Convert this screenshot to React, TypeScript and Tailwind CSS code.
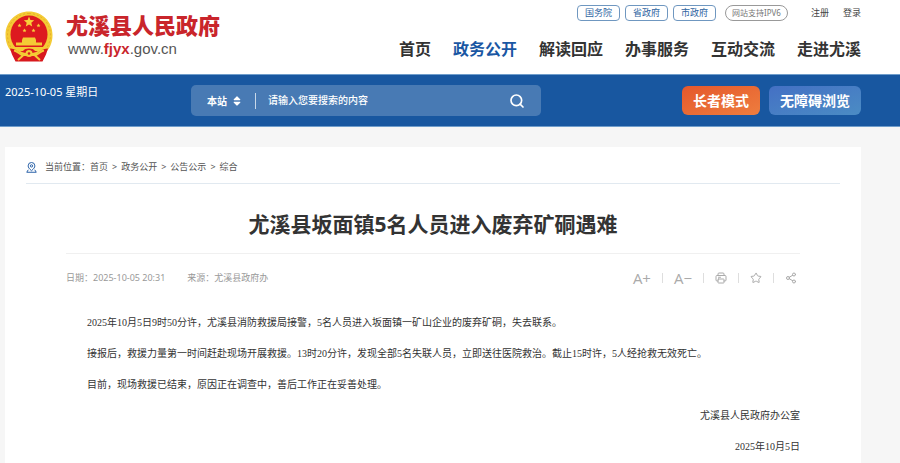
import React, { useState } from "react";
import { FaSort } from "react-icons/fa";
import { Search, Share2, Star } from "lucide-react";

const govLinks = ["国务院", "省政府", "市政府"];

const navItems = [
  { title: "首页", active: false },
  { title: "政务公开", active: true },
  { title: "解读回应", active: false },
  { title: "办事服务", active: false },
  { title: "互动交流", active: false },
  { title: "走进尤溪", active: false },
];

const crumbs = ["首页", "政务公开", "公告公示", "综合"];

const paragraphs = [
  "2025年10月5日9时50分许，尤溪县消防救援局接警，5名人员进入坂面镇一矿山企业的废弃矿硐，失去联系。",
  "接报后，救援力量第一时间赶赴现场开展救援。13时20分许，发现全部5名失联人员，立即送往医院救治。截止15时许，5人经抢救无效死亡。",
  "目前，现场救援已结束，原因正在调查中，善后工作正在妥善处理。",
];

const Emblem = () => (
  <svg viewBox="0 0 48 51" className="h-[51px] w-12 shrink-0" aria-hidden="true">
    <path
      d="M24 0.5C37 0.5 47.5 10.5 47.5 24c0 8-3 14-8 19l-3 7H11.500l-3-7C3.500 38 0.500 32 0.500 24 0.500 10.500 11 0.500 24 0.500z"
      fill="#f4cb35"
    />
    <path
      d="M24 2.500C36 2.500 45.500 12 45.500 24c0 7-3 13-7 17M24 2.500C12 2.500 2.500 12 2.500 24c0 7 3 13 7 17"
      fill="none"
      stroke="#e6b02a"
      strokeWidth="1"
      strokeDasharray="2 2"
    />
    <ellipse cx="24" cy="23.500" rx="18.500" ry="19" fill="#dd1a1f" />
    <path
      d="M24 5.500l1.400 3.500 3.800.3-2.900 2.500.9 3.700L24 13.500l-3.200 2 .9-3.700-2.900-2.500 3.800-.3z"
      fill="#f8d23a"
    />
    <g fill="#f8d23a">
      <path d="M14.500 12.500l.6 1.300 1.400.1-1.100.9.400 1.400-1.300-.8-1.200.8.300-1.400-1.100-.9 1.400-.1z" />
      <path d="M33.500 12.500l.6 1.300 1.400.1-1.100.9.400 1.400-1.300-.8-1.200.8.300-1.400-1.100-.9 1.400-.1z" />
      <path d="M19.500 17.500l.6 1.300 1.400.1-1.100.9.400 1.400-1.300-.8-1.200.8.300-1.400-1.100-.9 1.400-.1z" />
      <path d="M28.500 17.500l.6 1.300 1.400.1-1.100.9.400 1.400-1.300-.8-1.200.8.300-1.400-1.100-.9 1.400-.1z" />
    </g>
    <path d="M18 26.500h12l1 2.500v2.500h6v3H11v-3h6V29z" fill="#f4cb35" />
    <path d="M8 36h32l-4.500 4H30c-1-1.700-3-2.500-6-2.500s-5 .8-6 2.500h-5.500z" fill="#f4cb35" />
    <path
      d="M5 37.500c5 0 8 3 12 6h14c4-3 7-6 12-6l-2 6-3.500 7h-27L7 43.500z"
      fill="#d8181d"
    />
    <path
      d="M9 39.500c3 .5 5 3 8 4.500h14c3-1.500 5-4 8-4.500M13 49l5-4.500M35 49l-5-4.500"
      fill="none"
      stroke="#f4cb35"
      strokeWidth="2"
    />
    <circle cx="24" cy="42.500" r="3.500" fill="#f4cb35" />
    <circle cx="24" cy="42.500" r="1.300" fill="#dd1a1f" />
  </svg>
);

const PinIcon = () => (
  <svg
    viewBox="0 0 22 22"
    className="size-[11px] shrink-0"
    fill="none"
    stroke="#2a62a8"
    strokeWidth="2"
    strokeLinejoin="round"
    aria-hidden="true"
  >
    <path d="M11 17.500C6.500 13.500 4.300 10.800 4.300 7.700a6.700 6.700 0 0 1 13.400 0c0 3.100-2.200 5.800-6.700 9.800z" />
    <circle cx="11" cy="7.800" r="2.300" />
    <path d="M4.500 15.500L1.500 20.500h19l-3-5" />
  </svg>
);

const PrintIcon = () => (
  <svg
    viewBox="0 0 24 24"
    className="size-3"
    fill="none"
    stroke="currentColor"
    strokeWidth="2"
    strokeLinejoin="round"
    strokeLinecap="round"
    aria-hidden="true"
  >
    <path d="M6 7V4a2 2 0 0 1 2-2h8a2 2 0 0 1 2 2v3" />
    <path d="M6 18H4a2 2 0 0 1-2-2V9a2 2 0 0 1 2-2h16a2 2 0 0 1 2 2v7a2 2 0 0 1-2 2h-2" />
    <rect x="6" y="14" width="12" height="8" rx="1" />
    <path d="M7 10.500h4" />
  </svg>
);

const Divider = () => <span className="h-2.5 w-px bg-[#dedede]" />;

const Header = () => (
  <header className="bg-white">
    <div className="mr-[39px] ml-[5px] flex h-[74px] justify-between">
      <a href="#" className="flex items-start gap-[13px] pt-[11px]">
        <Emblem />
        <span className="flex flex-col whitespace-nowrap">
          <span className="text-[22px] leading-[29px] font-black text-[#c9252b]">
            尤溪县人民政府
          </span>
          <span className="pl-0.5 font-['Liberation_Sans',sans-serif] text-[15px] leading-[18px] text-[#555]">
            www.<b className="text-[#c9252b]">fjyx</b>.gov.cn
          </span>
        </span>
      </a>
      <div className="flex flex-col items-end whitespace-nowrap">
        <div className="flex items-center gap-[5px] pt-[5px] text-[9px] leading-4 text-[#444]">
          {govLinks.map((item) => (
            <a
              href="#"
              key={item}
              className="flex h-4 w-[43px] items-center justify-center rounded-sm border border-[#6f97c0] text-[#2f659f]"
            >
              {item}
            </a>
          ))}
          <a
            href="#"
            className="ml-1 flex h-4 w-[63px] items-center justify-center rounded-full border border-[#999] text-[8px] text-[#777]"
          >
            网站支持IPV6
          </a>
          <a href="#" className="ml-[18px]">
            注册
          </a>
          <a href="#" className="ml-[9px]">
            登录
          </a>
        </div>
        <nav className="flex gap-[22px] pt-4 text-[16px] leading-6 font-bold">
          {navItems.map((item) => (
            <a
              href="#"
              key={item.title}
              className={item.active ? "text-[#1a57a3]" : "text-[#333]"}
            >
              {item.title}
            </a>
          ))}
        </nav>
      </div>
    </div>
  </header>
);

const SearchBar = () => {
  const [keyword, setKeyword] = useState<string>("");

  return (
    <div className="border-y border-[#6f9dcb] bg-[#1857a0]">
      <div className="mr-[39px] ml-[5px] flex items-start py-2.5 text-white">
        <span className="w-[186px] shrink-0 text-[11px] leading-[14px]">
          2025-10-05 星期日
        </span>
        <form
          className="flex h-[31px] max-w-[350px] flex-1 items-center rounded-[5px] bg-[#487ab4] px-4 text-[10px] font-medium"
          onSubmit={(e) => e.preventDefault()}
        >
          <select
            aria-label="搜索范围"
            className="h-6 w-6 appearance-none bg-transparent leading-6 font-bold"
          >
            <option>本站</option>
          </select>
          <FaSort className="size-3" />
          <span className="mx-3 h-4 w-px bg-[#c8d8e9]" />
          <input
            type="text"
            aria-label="搜索内容"
            placeholder="请输入您要搜索的内容"
            className="min-w-0 flex-1 placeholder:text-white focus:outline-none"
            value={keyword}
            onChange={(e) => setKeyword(e.target.value)}
          />
          <button type="submit" aria-label="搜索">
            <Search className="size-4" strokeWidth={2.5} />
          </button>
        </form>
        <div className="ml-auto flex h-[31px] items-center gap-[9px] text-[14px] font-bold">
          <button
            type="button"
            className="h-[29px] w-[78px] rounded-md bg-linear-to-br from-[#e4572c] to-[#ee7d3e]"
          >
            长者模式
          </button>
          <button
            type="button"
            className="h-[29px] w-[92px] rounded-md bg-linear-to-br from-[#4470c4] to-[#4b8cc4]"
          >
            无障碍浏览
          </button>
        </div>
      </div>
    </div>
  );
};

const Breadcrumb = () => (
  <nav className="mx-[21px] flex items-center gap-2 border-b border-[#e1e9f0] pt-3 pb-2 text-[9px] leading-4 text-[#555]">
    <PinIcon />
    <span>
      当前位置：
      {crumbs.map((item, i) => (
        <React.Fragment key={item}>
          {i > 0 && <span className="mx-1">&gt;</span>}
          <a href="#">{item}</a>
        </React.Fragment>
      ))}
    </span>
  </nav>
);

const Tools = () => (
  <div className="mr-[3px] flex items-center gap-[11px] text-[#aaa]">
    <button
      type="button"
      className="font-['Open_Sans',sans-serif] text-[15px] leading-4"
    >
      A+
    </button>
    <Divider />
    <button
      type="button"
      className="font-['Open_Sans',sans-serif] text-[15px] leading-4"
    >
      A−
    </button>
    <Divider />
    <button type="button" aria-label="打印">
      <PrintIcon />
    </button>
    <Divider />
    <button type="button" aria-label="收藏">
      <Star className="size-3" />
    </button>
    <Divider />
    <button type="button" aria-label="分享">
      <Share2 className="size-3" />
    </button>
  </div>
);

const App = () => {
  return (
    <div className="flex min-h-screen flex-col bg-[#f6f6f6] font-['Noto_Sans','Noto_Sans_CJK_SC',sans-serif]">
      <Header />
      <SearchBar />
      <main className="mt-5 mr-[39px] ml-[5px] flex-1 bg-white">
        <Breadcrumb />
        <article className="mx-[61px]">
          <h1 className="border-b border-[#f0f0f0] pt-[25px] pb-3.5 text-center text-[21px] leading-[30px] font-bold text-[#333]">
            尤溪县坂面镇5名人员进入废弃矿硐遇难
          </h1>
          <div className="flex h-[47px] items-center justify-between text-[9px] text-[#999]">
            <div className="flex gap-[22px]">
              <span>日期：2025-10-05 20:31</span>
              <span>来源：尤溪县政府办</span>
            </div>
            <Tools />
          </div>
          <div className="mt-1.5 font-['Liberation_Serif','Noto_Sans_CJK_SC',serif] text-[10px] leading-[31px] text-[#333]">
            {paragraphs.map((item) => (
              <p key={item} className="indent-[21px]">
                {item}
              </p>
            ))}
            <p className="text-right">尤溪县人民政府办公室</p>
            <p className="text-right">2025年10月5日</p>
          </div>
        </article>
      </main>
    </div>
  );
};

export default App;
